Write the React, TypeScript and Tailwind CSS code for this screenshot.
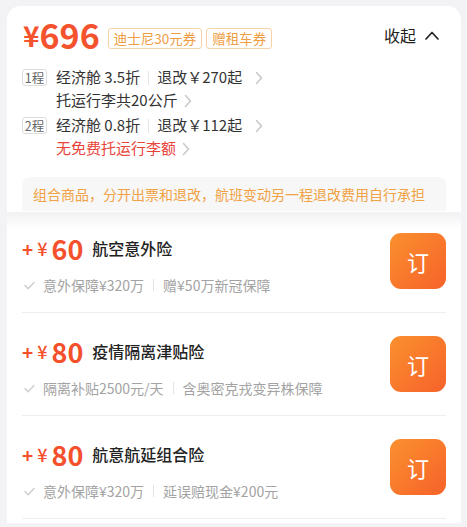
import React from "react";

const Chevron = () => (
  <svg width="8" height="14" viewBox="0 0 8 14" className="ml-[6px] shrink-0">
    <path d="M1.5 1.5l5 5.5-5 5.5" fill="none" stroke="#c9c9c9" strokeWidth="1.6" strokeLinecap="round" strokeLinejoin="round" />
  </svg>
);

const Check = () => (
  <svg width="11" height="9" viewBox="0 0 11 9" className="shrink-0">
    <path d="M1 4.5l3.2 3.2L10 1.5" fill="none" stroke="#cfcfcf" strokeWidth="1.5" strokeLinecap="round" strokeLinejoin="round" />
  </svg>
);

const Leg = ({ n, cls, refund, second, red }: { n: string; cls: string; refund: string; second: string; red?: boolean }) => (
  <div className="flex flex-col">
    <div className="flex items-center h-[23px]">
      <span className="w-[25px] h-[17px] border border-[#dcdcdc] rounded-[3px] text-[12.5px] leading-[15px] text-[#666] flex items-center justify-center">
        {n}
      </span>
      <span className="ml-[9px] text-[15px] text-[#333]">{cls}</span>
      <span className="mx-[8px] w-px h-[14px] bg-[#e6e6e6]" />
      <span className="text-[15px] text-[#333]">{refund}</span>
      <span className="ml-[7px]"><Chevron /></span>
    </div>
    <div className="flex items-center h-[23px] pl-[34px]">
      <span className={"text-[15px] " + (red ? "text-[#e8443a]" : "text-[#333]")}>{second}</span>
      <Chevron />
    </div>
  </div>
);

const Item = ({ price, name, a, b, first }: { price: string; name: string; a: string; b: string; first?: boolean }) => (
  <div className={"flex items-start justify-between border-b border-[#eeeeee] pb-[17px] " + (first ? "pt-[18px]" : "pt-[23px]")}>
    <div className="flex flex-col">
      <div className="flex items-center h-[30px]">
        <span className="text-[#f4502c] text-[19px] font-bold leading-none">+</span>
        <span className="text-[#f4502c] text-[18px] font-medium leading-none ml-[4px]">¥</span>
        <span className="text-[#f4502c] text-[27px] font-bold leading-none ml-[4px]">{price}</span>
        <span className="text-[16px] font-medium text-[#222] ml-[9px]">{name}</span>
      </div>
      <div className="flex items-center h-[20px] mt-[12px] pl-[2px]">
        <Check />
        <span className="ml-[8px] text-[14px] text-[#a3a3a3]">{a}</span>
        <span className="mx-[9px] w-px h-[12px] bg-[#e3e3e3]" />
        <span className="text-[14px] text-[#a3a3a3]">{b}</span>
      </div>
    </div>
    <button className="w-[56px] h-[56px] rounded-[11px] bg-[linear-gradient(135deg,#fb902e,#f6622a)] text-white text-[22px] flex items-center justify-center">
      订
    </button>
  </div>
);

export default function App() {
  return (
    <div className="w-[467px] h-[527px] bg-[#f3f3f5] overflow-hidden font-['Noto_Sans_CJK_SC',sans-serif]">
      <div className="h-[6px]" />
      <div className="ml-[7px] mr-[6px] bg-white rounded-t-[14px] px-[15px] pt-[9px] pb-[1px]">
        <div className="flex items-center justify-between h-[40px]">
          <div className="flex items-center">
            <span className="text-[#f4532e] text-[28px] font-semibold leading-none ml-[1px]">¥</span>
            <span className="text-[#f4532e] text-[34px] font-semibold leading-none">696</span>
            <span className="ml-[8px] mt-[6px] h-[21px] px-[5px] border border-[#f6d2a8] rounded-[3px] text-[13.5px] leading-[19px] text-[#ef9d45]">迪士尼30元券</span>
            <span className="ml-[4px] mt-[6px] h-[21px] px-[5px] border border-[#f6d2a8] rounded-[3px] text-[13.5px] leading-[19px] text-[#ef9d45]">赠租车券</span>
          </div>
          <div className="flex items-center mr-[7px]">
            <span className="text-[16px] text-[#222]">收起</span>
            <svg width="14" height="9" viewBox="0 0 14 9" className="ml-[9px]">
              <path d="M1 8l6-6.5 6 6.5" fill="none" stroke="#222" strokeWidth="1.7" strokeLinecap="round" strokeLinejoin="round" />
            </svg>
          </div>
        </div>
        <div className="mt-[11px] flex flex-col gap-[2px]">
          <Leg n="1程" cls="经济舱 3.5折" refund="退改￥270起" second="托运行李共20公斤" />
          <Leg n="2程" cls="经济舱 0.8折" refund="退改￥112起" second="无免费托运行李额" red />
        </div>
        <div className="mt-[17px] h-[34px] rounded-t-[8px] bg-[#f7f7f8] pl-[11px] flex items-center">
          <span className="text-[14px] text-[#f0a244] whitespace-nowrap">组合商品，分开出票和退改，航班变动另一程退改费用自行承担</span>
        </div>
      </div>
      <div className="h-[3px]" />
      <div className="ml-[7px] mr-[6px] bg-[linear-gradient(to_bottom,#f4f4f6,#ffffff_14px)] px-[15px] pb-[4px]">
        <Item first price="60" name="航空意外险" a="意外保障¥320万" b="赠¥50万新冠保障" />
        <Item price="80" name="疫情隔离津贴险" a="隔离补贴2500元/天" b="含奥密克戎变异株保障" />
        <Item price="80" name="航意航延组合险" a="意外保障¥320万" b="延误赔现金¥200元" />
      </div>
    </div>
  );
}
